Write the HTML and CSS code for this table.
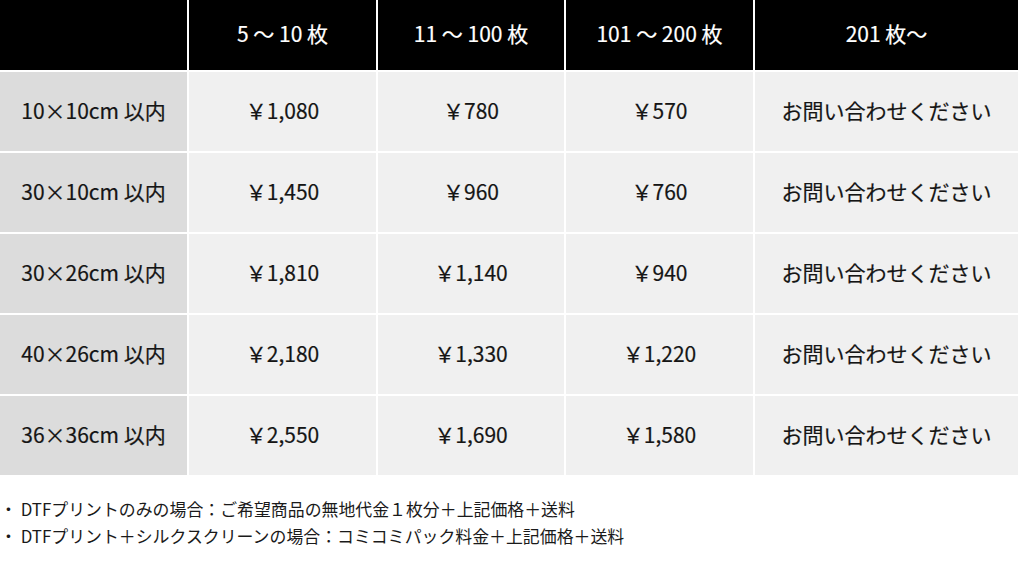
FILE: index.html
```html
<!DOCTYPE html>
<html lang="ja">
<head>
<meta charset="utf-8">
<title>DTFプリント料金表</title>
<link rel="stylesheet" href="styles.css">
</head>
<body>
<div class="price-table">
  <div class="cell head"></div>
  <div class="cell head">5 ～ 10 枚</div>
  <div class="cell head">11 ～ 100 枚</div>
  <div class="cell head">101 ～ 200 枚</div>
  <div class="cell head">201 枚～</div>

  <div class="cell size">10×10cm 以内</div>
  <div class="cell">￥1,080</div>
  <div class="cell">￥780</div>
  <div class="cell">￥570</div>
  <div class="cell">お問い合わせください</div>

  <div class="cell size">30×10cm 以内</div>
  <div class="cell">￥1,450</div>
  <div class="cell">￥960</div>
  <div class="cell">￥760</div>
  <div class="cell">お問い合わせください</div>

  <div class="cell size">30×26cm 以内</div>
  <div class="cell">￥1,810</div>
  <div class="cell">￥1,140</div>
  <div class="cell">￥940</div>
  <div class="cell">お問い合わせください</div>

  <div class="cell size">40×26cm 以内</div>
  <div class="cell">￥2,180</div>
  <div class="cell">￥1,330</div>
  <div class="cell">￥1,220</div>
  <div class="cell">お問い合わせください</div>

  <div class="cell size">36×36cm 以内</div>
  <div class="cell">￥2,550</div>
  <div class="cell">￥1,690</div>
  <div class="cell">￥1,580</div>
  <div class="cell">お問い合わせください</div>
</div>
<ul class="notes">
  <li>・ DTFプリントのみの場合：ご希望商品の無地代金１枚分＋上記価格＋送料</li>
  <li>・ DTFプリント＋シルクスクリーンの場合：コミコミパック料金＋上記価格＋送料</li>
</ul>
</body>
</html>
```

FILE: styles.css
```css
html, body {
  margin: 0;
  padding: 0;
  background: #ffffff;
}

body {
  font-family: "Noto Sans CJK JP", "Noto Sans", sans-serif;
  color: #151515;
  width: 1024px;
  height: 575px;
  overflow: hidden;
}

.price-table {
  display: grid;
  grid-template-columns: 187px 187px 186px 187px 263px;
  grid-template-rows: 70px repeat(5, 79px);
  gap: 2px;
  width: 1018px;
}

.cell {
  display: flex;
  align-items: center;
  justify-content: center;
  padding-bottom: 3px;
  background: #f0f0f0;
  font-size: 21px;
  font-weight: 400;
  white-space: nowrap;
  -webkit-text-stroke: 0.2px #151515;
}

.cell.head {
  background: #000000;
  color: #ffffff;
  font-size: 21px;
  padding-bottom: 4px;
  -webkit-text-stroke: 0.2px #ffffff;
}

.cell.size {
  background: #dcdcdc;
}

.notes {
  list-style: none;
  margin: 20px 0 0;
  padding: 0;
  font-size: 16.9px;
  line-height: 27px;
  color: #1a1a1a;
}
```
